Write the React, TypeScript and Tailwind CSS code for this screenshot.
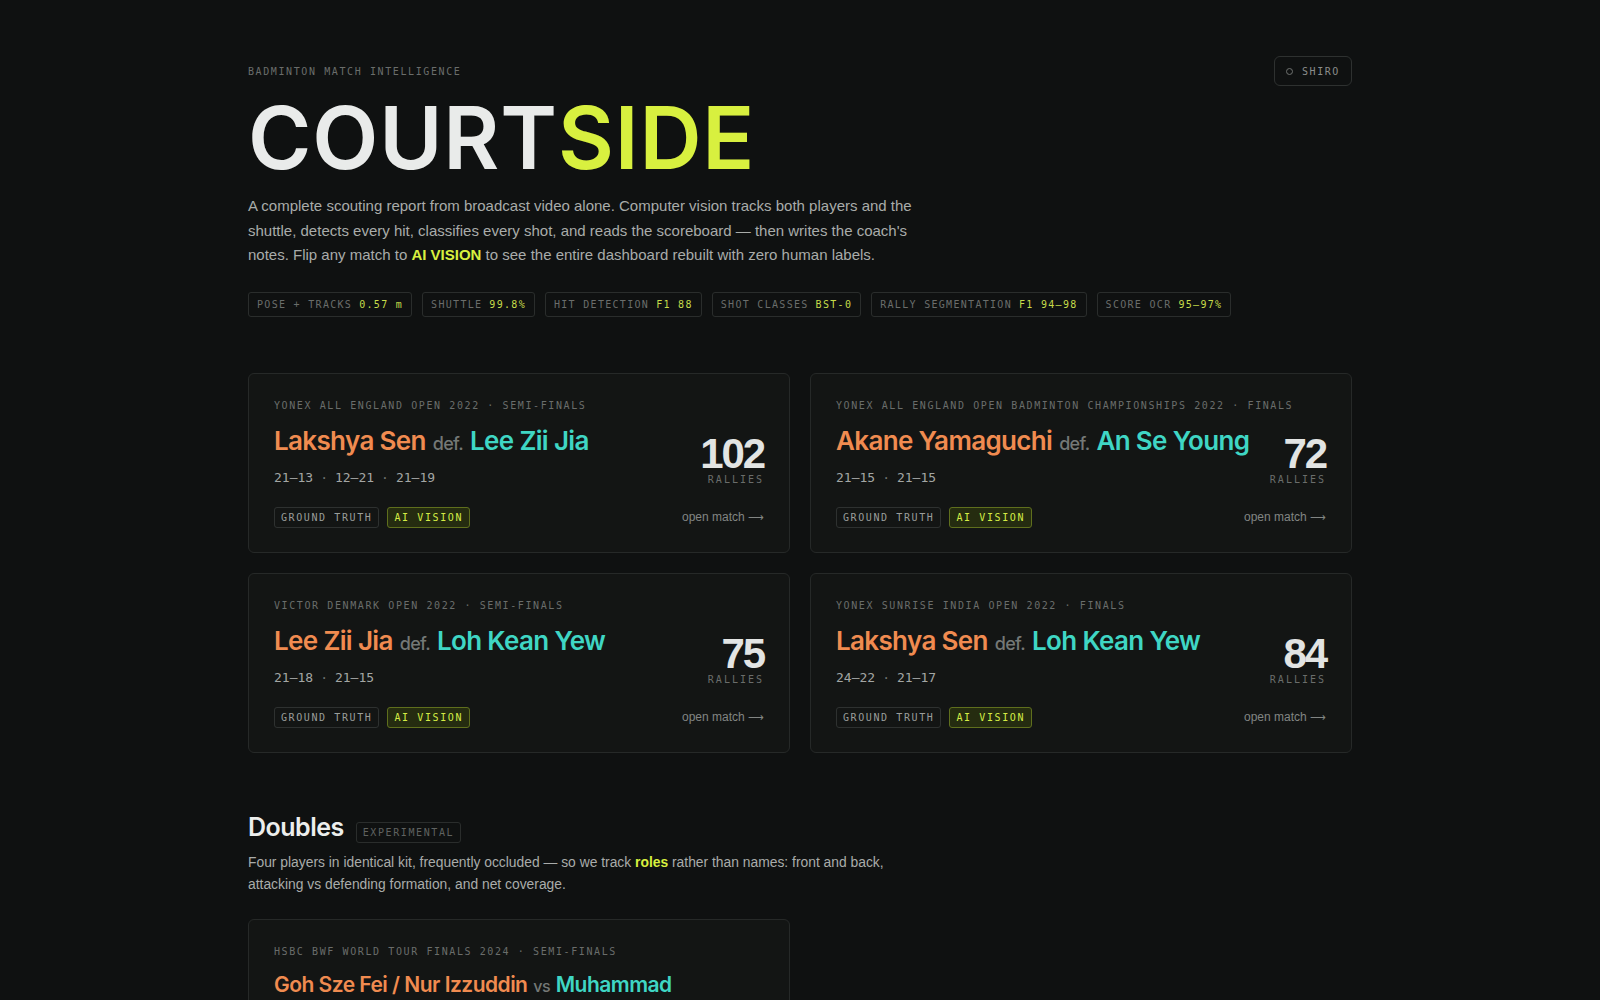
import React from 'react';

type Match = {
  event: string;
  winner: string;
  loser: string;
  joiner?: string;
  games: string[];
  rallies: number;
};

const matches: Match[] = [
  {
    event: 'YONEX ALL ENGLAND OPEN 2022 · SEMI-FINALS',
    winner: 'Lakshya Sen',
    loser: 'Lee Zii Jia',
    games: ['21–13', '12–21', '21–19'],
    rallies: 102,
  },
  {
    event: 'YONEX ALL ENGLAND OPEN BADMINTON CHAMPIONSHIPS 2022 · FINALS',
    winner: 'Akane Yamaguchi',
    loser: 'An Se Young',
    games: ['21–15', '21–15'],
    rallies: 72,
  },
  {
    event: 'VICTOR DENMARK OPEN 2022 · SEMI-FINALS',
    winner: 'Lee Zii Jia',
    loser: 'Loh Kean Yew',
    games: ['21–18', '21–15'],
    rallies: 75,
  },
  {
    event: 'YONEX SUNRISE INDIA OPEN 2022 · FINALS',
    winner: 'Lakshya Sen',
    loser: 'Loh Kean Yew',
    games: ['24–22', '21–17'],
    rallies: 84,
  },
];

const doubles: Match = {
  event: 'HSBC BWF WORLD TOUR FINALS 2024 · SEMI-FINALS',
  winner: 'Goh Sze Fei / Nur Izzuddin',
  loser: 'Muhammad Shohibul Fikri / Sabar Karyaman Gutama',
  joiner: 'vs',
  games: ['21–17', '19–21', '21–16'],
  rallies: 96,
};

const metrics = [
  ['POSE + TRACKS', '0.57 m'],
  ['SHUTTLE', '99.8%'],
  ['HIT DETECTION', 'F1 88'],
  ['SHOT CLASSES', 'BST-0'],
  ['RALLY SEGMENTATION', 'F1 94–98'],
  ['SCORE OCR', '95–97%'],
];

const mono = "font-['DejaVu_Sans_Mono','Liberation_Mono',monospace]";
const head = "font-['Inter','Liberation_Sans',sans-serif]";

const MatchCard = ({ m, pair = false }: { m: Match; pair?: boolean }) => (
  <div className="rounded-md border border-[#262928] bg-[#131514] px-[25px] pt-[24px] pb-[24px]">
    <div className={`${mono} text-[10px] leading-4 tracking-[0.16em] text-[#6a6d6b]`}>{m.event}</div>
    <div className="mt-[11px] flex items-end justify-between gap-3">
      <div className="min-w-0">
        <div
          className={`${head} font-semibold tracking-[-0.025em] ${
            pair ? 'text-[21px] leading-[27px]' : 'text-[26px] leading-[32px]'
          }`}
        >
          <span className="text-[#f08b50]">{m.winner}</span>{' '}
          <span className={`mx-[1px] font-medium text-[#747876] ${pair ? 'text-[16px]' : 'text-[18px]'}`}>
            {m.joiner ?? 'def.'}
          </span>{' '}
          <span className="text-[#3fd6c4]">{m.loser}</span>
        </div>
        <div className={`${mono} mt-[8px] text-[13px] leading-5 text-[#a3a6a4]`}>
          {m.games.map((g, i) => (
            <span key={g + i}>
              {i > 0 && <span className="mx-[7px] text-[#6f7270]">·</span>}
              {g}
            </span>
          ))}
        </div>
      </div>
      <div className="flex shrink-0 flex-col items-end">
        <div className="font-['Liberation_Sans',sans-serif] text-[42px] leading-[42px] font-bold tracking-[-0.05em] text-[#e2e4e3]">
          {m.rallies}
        </div>
        <div className={`${mono} -mt-[3px] text-[10px] leading-4 tracking-[0.2em] text-[#6a6d6b]`}>RALLIES</div>
      </div>
    </div>
    <div className="mt-[19px] flex items-center justify-between">
      <div className={`${mono} flex gap-2 text-[10px] tracking-[0.16em]`}>
        <span className="rounded-[3px] border border-[#2e3130] px-[6px] py-[2px] text-[#9a9d9b]">GROUND TRUTH</span>
        <span className="rounded-[3px] border border-[#5f6f1d] bg-[#252c10] px-[6px] py-[2px] text-[#d4ec45]">AI VISION</span>
      </div>
      <span className="font-['Liberation_Sans',sans-serif] text-[12px] text-[#828583]">
        open match <span className="text-[11px]">⟶</span>
      </span>
    </div>
  </div>
);

export default function App() {
  return (
    <div className="min-h-screen bg-[#0f1111] font-['Liberation_Sans',sans-serif] text-[#e6e8e7]">
      <div className="mx-auto max-w-[1104px] pt-[56px] pb-24">
        <div className="flex items-center justify-between">
          <div className={`${mono} text-[10px] tracking-[0.16em] text-[#6a6d6b]`}>BADMINTON MATCH INTELLIGENCE</div>
          <button className={`${mono} flex h-[30px] items-center gap-[9px] rounded-md border border-[#2e3130] px-[11px] text-[10px] tracking-[0.16em] text-[#8a8d8b]`}>
            <span className="h-[7px] w-[7px] rounded-full border border-[#6f7270]" />
            SHIRO
          </button>
        </div>

        <h1 className={`${head} mt-[9px] text-[86px] leading-none font-semibold tracking-[0.01em]`}>
          <span className="text-[#e9ebea]">COURT</span>
          <span className="text-[#d8f03f]">SIDE</span>
        </h1>

        <p className="mt-[13px] max-w-[680px] text-[15px] leading-[24.5px] text-[#a9acaa]">
          A complete scouting report from broadcast video alone. Computer vision tracks both players and the
          shuttle, detects every hit, classifies every shot, and reads the scoreboard — then writes the coach's
          notes. Flip any match to <span className="font-bold text-[#d8f03f]">AI VISION</span> to see the entire
          dashboard rebuilt with zero human labels.
        </p>

        <div className={`${mono} mt-[24px] flex flex-wrap gap-[10px] text-[10px] tracking-[0.13em]`}>
          {metrics.map(([label, value]) => (
            <span key={label} className="flex h-[25px] items-center gap-[7px] rounded-[3px] border border-[#2a2d2c] px-[8px]">
              <span className="text-[#6a6d6b]">{label}</span>
              <span className="text-[#c6dc4a]">{value}</span>
            </span>
          ))}
        </div>

        <div className="mt-[56px] grid grid-cols-2 gap-5">
          {matches.map((m) => (
            <MatchCard key={m.event + m.winner} m={m} />
          ))}
        </div>

        <div className="mt-[58px] flex items-center gap-3">
          <h2 className={`${head} text-[25px] leading-8 font-semibold tracking-[-0.02em] text-[#eceeed]`}>Doubles</h2>
          <span className={`${mono} mt-[11px] flex h-[21px] items-center rounded-[3px] border border-[#2a2d2c] px-[6px] text-[10px] tracking-[0.16em] text-[#5f6260]`}>
            EXPERIMENTAL
          </span>
        </div>
        <p className="mt-[8px] max-w-[660px] text-[13.85px] leading-[22.5px] text-[#a9acaa]">
          Four players in identical kit, frequently occluded — so we track{' '}
          <span className="font-bold text-[#d8f03f]">roles</span> rather than names: front and back, attacking vs
          defending formation, and net coverage.
        </p>

        <div className="mt-[23px] grid grid-cols-2 gap-5">
          <MatchCard m={doubles} pair />
        </div>
      </div>
    </div>
  );
}
